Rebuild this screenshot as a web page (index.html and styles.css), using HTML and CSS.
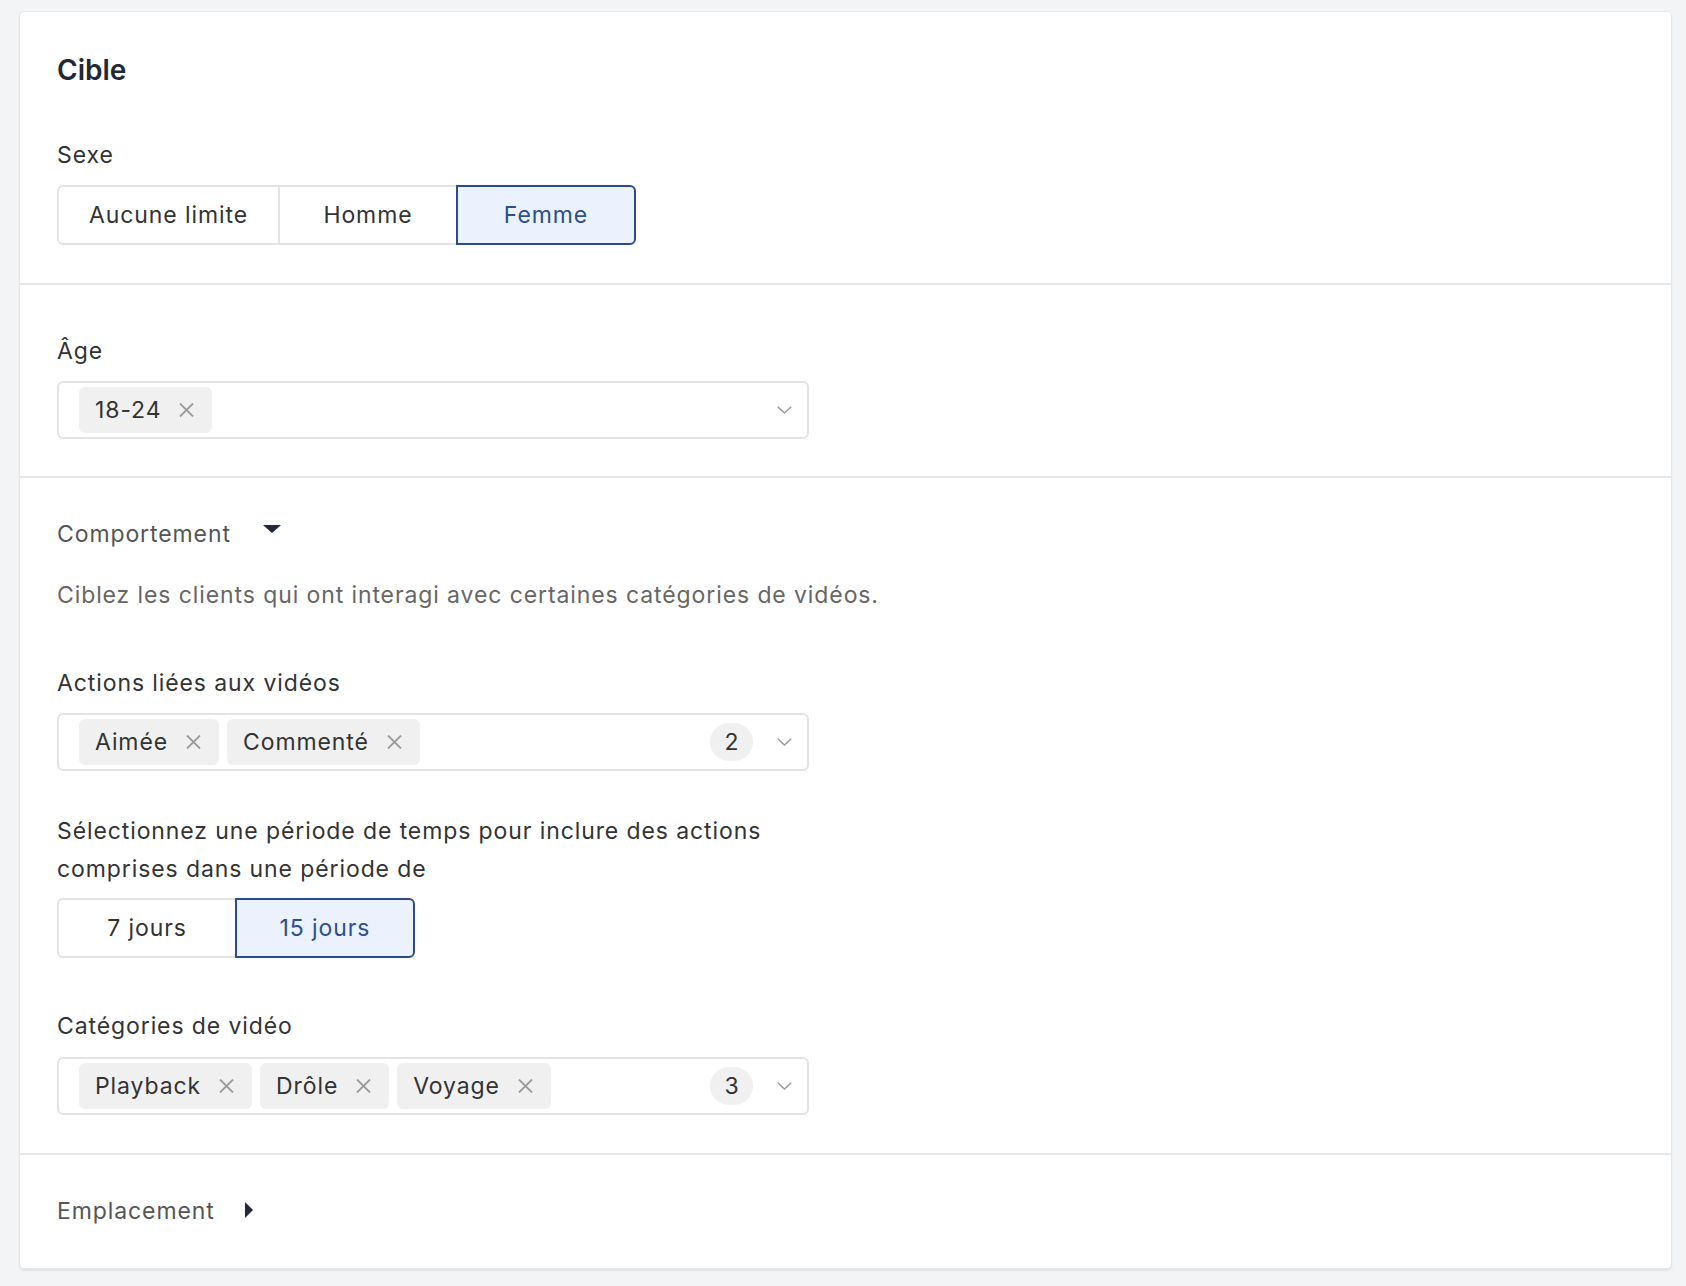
FILE: index.html
```html
<!DOCTYPE html>
<html lang="fr">
<head>
<meta charset="utf-8">
<title>Cible</title>
<link rel="stylesheet" href="styles.css">
</head>
<body>
<div class="card">
  <section class="sec sec-first">
    <h2 class="title">Cible</h2>
    <div class="label">Sexe</div>
    <div class="seg">
      <button class="seg-btn seg-wide">Aucune limite</button>
      <button class="seg-btn">Homme</button>
      <button class="seg-btn active">Femme</button>
    </div>
  </section>

  <section class="sec sec-age">
    <div class="label">Âge</div>
    <div class="select">
      <div class="tags">
        <span class="tag">18-24<svg class="x" viewBox="0 0 15 14"><path d="M1 0.5 L14 13.5 M14 0.5 L1 13.5"/></svg></span>
      </div>
      <svg class="chev" viewBox="0 0 15 8"><path d="M0.8 0.8 L7.5 7 L14.2 0.8"/></svg>
    </div>
  </section>

  <section class="sec sec-mid">
    <div class="toggle">Comportement<span class="tri-down"></span></div>
    <p class="desc">Ciblez les clients qui ont interagi avec certaines catégories de vidéos.</p>

    <div class="label label-actions">Actions liées aux vidéos</div>
    <div class="select">
      <div class="tags">
        <span class="tag">Aimée<svg class="x" viewBox="0 0 15 14"><path d="M1 0.5 L14 13.5 M14 0.5 L1 13.5"/></svg></span>
        <span class="tag">Commenté<svg class="x" viewBox="0 0 15 14"><path d="M1 0.5 L14 13.5 M14 0.5 L1 13.5"/></svg></span>
      </div>
      <span class="count">2</span>
      <svg class="chev" viewBox="0 0 15 8"><path d="M0.8 0.8 L7.5 7 L14.2 0.8"/></svg>
    </div>

    <div class="label label-period">Sélectionnez une période de temps pour inclure des actions comprises dans une période de</div>
    <div class="seg">
      <button class="seg-btn">7 jours</button>
      <button class="seg-btn active">15 jours</button>
    </div>

    <div class="label label-cat">Catégories de vidéo</div>
    <div class="select">
      <div class="tags">
        <span class="tag">Playback<svg class="x" viewBox="0 0 15 14"><path d="M1 0.5 L14 13.5 M14 0.5 L1 13.5"/></svg></span>
        <span class="tag">Drôle<svg class="x" viewBox="0 0 15 14"><path d="M1 0.5 L14 13.5 M14 0.5 L1 13.5"/></svg></span>
        <span class="tag">Voyage<svg class="x" viewBox="0 0 15 14"><path d="M1 0.5 L14 13.5 M14 0.5 L1 13.5"/></svg></span>
      </div>
      <span class="count">3</span>
      <svg class="chev" viewBox="0 0 15 8"><path d="M0.8 0.8 L7.5 7 L14.2 0.8"/></svg>
    </div>
  </section>

  <section class="sec sec-last">
    <div class="toggle">Emplacement<span class="tri-right"></span></div>
  </section>
</div>
</body>
</html>
```

FILE: styles.css
```css
* { box-sizing: border-box; }

html, body {
  margin: 0;
  padding: 0;
  background: #f3f4f6;
}

body {
  padding: 11px 14px 17px 19px;
  font-family: Inter, "Noto Sans", "Liberation Sans", sans-serif;
  font-size: 23px;
  letter-spacing: 0.9px;
  color: #333333;
}

.card {
  background: #ffffff;
  border: 1px solid #e5e7eb;
  border-radius: 5px;
  box-shadow: 0 2px 2px rgba(0, 0, 0, 0.07);
}

.sec {
  padding: 36px 37px 38px 37px;
  border-top: 2px solid #e5e7eb;
}

.sec-first {
  border-top: none;
  padding-top: 38px;
}

.sec-age { padding-top: 46px; padding-bottom: 37px; }
.sec-last { padding-bottom: 37px; }

.title {
  margin: 0 0 45px 0;
  font-size: 28px;
  line-height: 40px;
  font-weight: 600;
  letter-spacing: 0;
  color: #1f2937;
}

.label {
  font-size: 23px;
  line-height: 40px;
  color: #333333;
  margin-bottom: 10px;
  max-width: 752px;
}

.label-actions { margin-top: 48px; }
.label-period { margin-top: 41px; line-height: 38px; }
.label-cat { margin-top: 48px; margin-bottom: 11px; }

/* segmented buttons */
.seg {
  display: flex;
}

.seg-btn {
  position: relative;
  height: 60px;
  min-width: 180px;
  padding: 0 30px;
  margin-left: -2px;
  border: 2px solid #e3e3e3;
  background: #ffffff;
  font-family: inherit;
  font-size: 23px;
  letter-spacing: 0.9px;
  color: #333333;
  cursor: pointer;
}

.seg-btn:first-child {
  margin-left: 0;
  border-radius: 6px 0 0 6px;
}

.seg-btn:last-child {
  border-radius: 0 6px 6px 0;
}

.seg-wide { min-width: 222px; }

.seg-btn.active {
  z-index: 1;
  border-color: #2b4b8b;
  background: #ebf2fd;
  color: #2d4f8d;
}

/* select with tags */
.select {
  display: flex;
  align-items: center;
  width: 752px;
  height: 58px;
  padding: 0 15px 0 20px;
  border: 2px solid #e3e3e3;
  border-radius: 6px;
}

.tags {
  flex: 1;
  display: flex;
  gap: 8px;
}

.tag {
  display: inline-flex;
  align-items: center;
  gap: 18px;
  height: 46px;
  padding: 0 18px 0 16px;
  background: #f0f0f0;
  border-radius: 6px;
  color: #333333;
}

.x {
  width: 15px;
  height: 14px;
  fill: none;
  stroke: #9a9a9a;
  stroke-width: 1.8;
}

.count {
  display: inline-flex;
  align-items: center;
  justify-content: center;
  width: 43px;
  height: 38px;
  border-radius: 19px;
  background: #f0f0f0;
  color: #333333;
  letter-spacing: 0;
  margin-right: 24px;
}

.chev {
  width: 15px;
  height: 8px;
  fill: none;
  stroke: #9a9a9a;
  stroke-width: 1.5;
}

/* collapsible headers */
.toggle {
  display: flex;
  align-items: flex-start;
  font-size: 23px;
  line-height: 40px;
  color: #555555;
}

.tri-down {
  width: 0;
  height: 0;
  margin-left: 32px;
  margin-top: 11px;
  border-left: 9px solid transparent;
  border-right: 9px solid transparent;
  border-top: 8px solid #1f2937;
}

.tri-right {
  width: 0;
  height: 0;
  margin-left: 30px;
  margin-top: 11px;
  border-top: 8.5px solid transparent;
  border-bottom: 8.5px solid transparent;
  border-left: 8px solid #1f2937;
}

.desc {
  margin: 21px 0 0 0;
  font-size: 23px;
  line-height: 40px;
  color: #666666;
}
```
